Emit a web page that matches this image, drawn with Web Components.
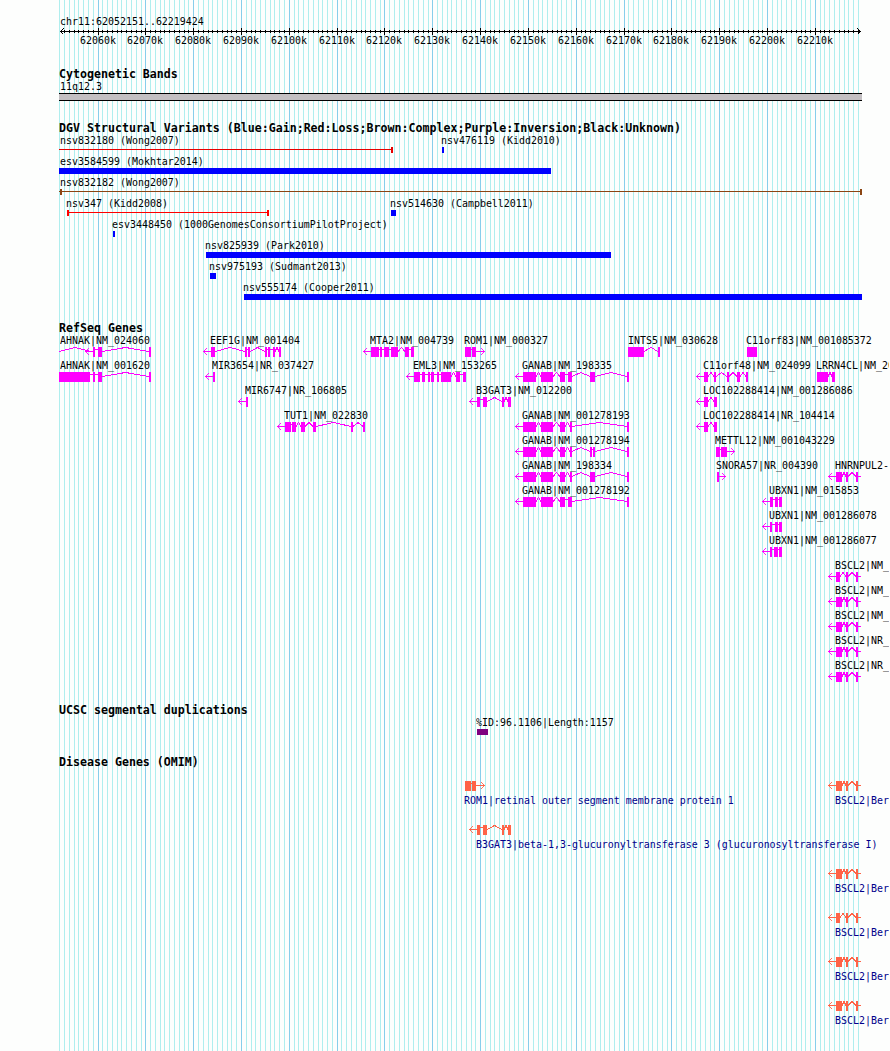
<!DOCTYPE html>
<html lang="en">
<head>
<meta charset="utf-8">
<title>chr11:62052151..62219424</title>
<style>
    body {
        margin: 0;
        background: #fdfefd;
        color: #000;
        font: 9.967px/12px "DejaVu Sans Mono", monospace;
    }
</style>
</head>
<body>
<genome-browser>
    <scale-ruler></scale-ruler>
    <genome-track heading="Cytogenetic Bands" data="bands" row-height="22"></genome-track>
    <genome-track heading="DGV Structural Variants (Blue:Gain;Red:Loss;Brown:Complex;Purple:Inversion;Black:Unknown)" data="variants" row-height="21"></genome-track>
    <genome-track heading="RefSeq Genes" data="genes" row-height="25"></genome-track>
    <genome-track heading="UCSC segmental duplications" data="duplications" row-height="20"></genome-track>
    <genome-track heading="Disease Genes (OMIM)" data="omim" row-height="44"></genome-track>
</genome-browser>

<script>
const REGION = { name: 'chr11', start: 62052151, end: 62219424 };
const LEFT = 60;
const RIGHT = 860;

function toX(bp) {
    return Math.round(LEFT + (bp - REGION.start) * (RIGHT - LEFT) / (REGION.end - REGION.start));
}

// exons are [start, end] pairs, tip is the end of the strand arrow
const gene = (label, at, exons, tip, extra = {}) => ({ type: 'gene', label, at, exons, tip, ...extra });
const bar = (label, at, start, end, color = '#00f') => ({ type: 'bar', label, at, start, end, color });
const span = (label, at, start, end, color, caps) => ({ type: 'span', label, at, start, end, color, caps });

const GANAB_HEAD = [[523, 536], [541, 553], [560, 565]];
const ROM1 = [[465, 471], [472, 476]];
const B3GAT3 = [[477, 480], [483, 487], [502, 504], [508, 511]];
const bscl = (label, firstEnd = 842) =>
    gene(label, 835, [[836, firstEnd], [846, 848], [856, 858]], 828, { runTo: 861 });
const omim = (item) => ({ ...item, color: '#ff6347', below: true });

const TRACKS = {
    bands: [
        [{ type: 'band', label: '11q12.3', at: 60, start: 59, end: 862 }]
    ],
    variants: [
        [
            span('nsv832180 (Wong2007)', 60, 59, 393, '#e60000', [391]),
            bar('nsv476119 (Kidd2010)', 441, 442, 444)
        ],
        [bar('esv3584599 (Mokhtar2014)', 60, 59, 551)],
        [span('nsv832182 (Wong2007)', 60, 59, 862, '#8b4513', [60, 860])],
        [
            span('nsv347 (Kidd2008)', 66, 67, 269, '#f00', [67, 267]),
            bar('nsv514630 (Campbell2011)', 390, 391, 396)
        ],
        [bar('esv3448450 (1000GenomesConsortiumPilotProject)', 112, 113, 115)],
        [bar('nsv825939 (Park2010)', 205, 206, 611)],
        [bar('nsv975193 (Sudmant2013)', 209, 210, 216)],
        [bar('nsv555174 (Cooper2011)', 243, 244, 862)]
    ],
    genes: [
        [
            gene('AHNAK|NM_024060', 60, [[93, 95], [98, 102], [149, 151]], 85, { lead: [59, 75, 91] }),
            gene('EEF1G|NM_001404', 210, [[211, 215], [245, 247], [248, 250], [265, 267], [268, 270], [273, 275], [279, 281]], 203),
            gene('MTA2|NM_004739', 370, [[371, 379], [380, 382], [384, 389], [391, 398], [405, 409], [411, 414]], 363),
            gene('ROM1|NM_000327', 464, ROM1, 485),
            gene('INTS5|NM_030628', 628, [[628, 644], [658, 660]]),
            gene('C11orf83|NM_001085372', 746, [[747, 757]])
        ],
        [
            gene('AHNAK|NM_001620', 60, [[59, 90], [93, 95], [98, 102], [149, 151]]),
            gene('MIR3654|NR_037427', 212, [[213, 215]], 205),
            gene('EML3|NM_153265', 413, [[414, 420], [422, 425], [428, 430], [431, 434], [437, 439], [441, 451], [456, 460], [463, 466]], 406),
            gene('GANAB|NM_198335', 522, [...GANAB_HEAD, [568, 572], [590, 595], [627, 629]], 515),
            gene('C11orf48|NM_024099', 703, [[704, 708], [714, 716], [727, 729], [737, 740], [746, 748]], 696),
            gene('LRRN4CL|NM_20', 816, [[817, 828], [832, 835]])
        ],
        [
            gene('MIR6747|NR_106805', 245, [[246, 248]], 238),
            gene('B3GAT3|NM_012200', 476, B3GAT3, 469),
            gene('LOC102288414|NM_001286086', 703, [[704, 708], [714, 717]], 696)
        ],
        [
            gene('TUT1|NM_022830', 284, [[285, 291], [292, 296], [301, 305], [313, 316], [351, 353], [363, 365]], 277),
            gene('GANAB|NM_001278193', 522, [...GANAB_HEAD, [570, 572], [627, 629]], 515),
            gene('LOC102288414|NR_104414', 703, [[704, 708], [714, 717]], 696)
        ],
        [
            gene('GANAB|NM_001278194', 522, [...GANAB_HEAD, [570, 572], [590, 592], [593, 595], [627, 629]], 515),
            gene('METTL12|NM_001043229', 715, [[716, 720], [721, 727]], 735)
        ],
        [
            gene('GANAB|NM_198334', 522, [...GANAB_HEAD, [570, 572], [590, 595], [627, 629]], 515),
            gene('SNORA57|NR_004390', 716, [[717, 719]], 726),
            bscl('HNRNPUL2-')
        ],
        [
            gene('GANAB|NM_001278192', 522, [...GANAB_HEAD, [568, 572], [627, 629]], 515),
            gene('UBXN1|NM_015853', 769, [[770, 773], [775, 778], [779, 782]], 762)
        ],
        [gene('UBXN1|NM_001286078', 769, [[770, 772], [775, 778], [779, 782]], 762)],
        [gene('UBXN1|NM_001286077', 769, [[770, 772], [774, 778], [779, 782]], 762)],
        [bscl('BSCL2|NM_', 840)],
        [bscl('BSCL2|NM_')],
        [bscl('BSCL2|NM_')],
        [bscl('BSCL2|NR_')],
        [bscl('BSCL2|NR_')]
    ],
    duplications: [
        [bar('%ID:96.1106|Length:1157', 476, 477, 488, '#800080')]
    ],
    omim: [
        [
            omim(gene('ROM1|retinal outer segment membrane protein 1', 464, ROM1, 485)),
            omim(bscl('BSCL2|Ber'))
        ],
        [omim(gene('B3GAT3|beta-1,3-glucuronyltransferase 3 (glucuronosyltransferase I)', 476, B3GAT3, 469))],
        [omim(bscl('BSCL2|Ber'))],
        [omim(bscl('BSCL2|Ber', 840))],
        [omim(bscl('BSCL2|Ber'))],
        [omim(bscl('BSCL2|Ber'))]
    ]
};

class GenomeBrowser extends HTMLElement {
    constructor() {
        super();
        this.attachShadow({ mode: 'open' });
        this.shadowRoot.innerHTML = `
            <style>
                :host {
                    display: grid;
                    width: 889px;
                    height: 1051px;
                    overflow: hidden;
                }

                grid-lines, .tracks {
                    grid-area: 1 / 1;
                }

                .tracks {
                    display: flex;
                    flex-direction: column;
                    gap: 19px;
                    padding-top: 16px;
                    min-width: 0;
                    z-index: 1;
                }
            </style>
            <grid-lines></grid-lines>
            <div class="tracks"><slot></slot></div>
        `;
    }
}

class GridLines extends HTMLElement {
    constructor() {
        super();
        this.attachShadow({ mode: 'open' });
        let lines = '';
        for (let kb = 62052; kb <= 62219; kb++) {
            const color = kb % 10 === 0 ? '#87ceeb' : '#afeeee';
            lines += `<rect x="${toX(kb * 1000)}" y="0" width="1" height="1051" fill="${color}"/>`;
        }
        this.shadowRoot.innerHTML = `
            <style>
                :host { display: block; }
                svg { display: block; }
            </style>
            <svg width="889" height="1051">${lines}</svg>
        `;
    }
}

class ScaleRuler extends HTMLElement {
    constructor() {
        super();
        this.attachShadow({ mode: 'open' });
        let ticks = '';
        let labels = '';
        for (let kb = 62053; kb <= 62219; kb++) {
            const x = toX(kb * 1000);
            if (kb % 10 === 0) {
                ticks += `<rect x="${x}" y="0" width="1" height="7"/>`;
                labels += `<span style="margin-left:${x - 18}px">${kb}k</span>`;
            } else {
                ticks += `<rect x="${x}" y="2" width="1" height="3"/>`;
            }
        }
        this.shadowRoot.innerHTML = `
            <style>
                :host { display: block; height: 33px; }
                svg { display: block; }
                .region { padding-left: 60px; }
                .labels { display: grid; }
                .labels span { grid-area: 1 / 1; justify-self: start; }
                .region, .labels { transform: scaleY(1.1); transform-origin: 0 9px; }
            </style>
            <div class="region">${REGION.name}:${REGION.start}..${REGION.end}</div>
            <svg width="889" height="7" shape-rendering="crispEdges">
                <rect x="60" y="3" width="801" height="1"/>
                ${ticks}
                <path d="M63.5 .5L60.5 3.5L63.5 6.5M857.5 .5L860.5 3.5L857.5 6.5" fill="none" stroke="#000"/>
            </svg>
            <div class="labels">${labels}</div>
        `;
    }
}

class GenomeTrack extends HTMLElement {
    constructor() {
        super();
        this.attachShadow({ mode: 'open' });
    }

    connectedCallback() {
        this.shadowRoot.innerHTML = `
            <style>
                :host { display: block; }

                h2 {
                    margin: 0 0 0 59px;
                    height: 13px;
                    font: bold 11.628px/12px "DejaVu Sans Mono", monospace;
                    white-space: nowrap;
                }

                .row {
                    display: grid;
                    grid-template-columns: 889px;
                    height: ${this.getAttribute('row-height')}px;
                }

                track-feature {
                    grid-area: 1 / 1;
                    justify-self: start;
                }
            </style>
            <h2>${this.getAttribute('heading')}</h2>
        `;

        TRACKS[this.getAttribute('data')].forEach((items) => {
            const row = document.createElement('div');
            row.className = 'row';
            items.forEach((item) => {
                const feature = document.createElement('track-feature');
                feature.item = item;
                row.appendChild(feature);
            });
            this.shadowRoot.appendChild(row);
        });
    }
}

class TrackFeature extends HTMLElement {
    constructor() {
        super();
        this.attachShadow({ mode: 'open' });
    }

    connectedCallback() {
        const { item } = this;
        const first = item.exons ? item.exons[0][0] : item.start;
        const x0 = Math.min(item.at, first, item.tip || Infinity, item.lead ? item.lead[0] : Infinity);
        const heights = { gene: 10, band: 8, bar: 6, span: 6 };
        const height = heights[item.type];

        this.shadowRoot.innerHTML = `
            <style>
                :host {
                    display: flex;
                    flex-direction: column;
                    margin-left: ${x0}px;
                }

                svg {
                    display: block;
                    overflow: visible;
                    flex: none;
                }

                .label {
                    height: 12px;
                    padding-left: ${item.at - x0}px;
                    white-space: nowrap;
                    transform: scaleY(1.1);
                    transform-origin: 0 9px;
                }

                :host(.below) svg { margin-top: 12px; }
                :host(.below) .label { order: 1; margin-top: 4px; color: #00008b; }
            </style>
            <div class="label">${item.label}</div>
            <svg width="1" height="${height}" viewBox="${x0} 0 1 ${height}" shape-rendering="crispEdges">
                ${this[item.type](item)}
            </svg>
        `;
        this.classList.toggle('below', Boolean(item.below));
    }

    bar({ start, end, color }) {
        return `<rect x="${start}" y="0" width="${end - start}" height="6" fill="${color}"/>`;
    }

    span({ start, end, color, caps }) {
        return `<g fill="${color}">
            <rect x="${start}" y="2" width="${end - start}" height="1"/>
            ${caps.map((x) => `<rect x="${x}" y="0" width="2" height="6"/>`).join('')}
        </g>`;
    }

    band({ start, end }) {
        return `<rect x="${start}" y="0" width="${end - start}" height="8"/>
            <rect x="${start}" y="1" width="${end - start}" height="6" fill="#c3bfc2"/>`;
    }

    gene({ exons, tip, lead, runTo, color = '#f0f' }) {
        const boxes = exons.map(([a, b]) => `<rect x="${a}" y="0" width="${b - a}" height="10"/>`).join('');
        const first = exons[0][0];
        const last = exons[exons.length - 1][1];
        let lines = '';
        let arrow = '';

        for (let i = 1; i < exons.length; i++) {
            const a = exons[i - 1][1];
            const b = exons[i][0];
            // tiny introns have no room for a peak
            lines += b - a <= 3
                ? `M${a} 2.5H${b}`
                : `M${a} 4.5L${(a + b) / 2} .5L${b} 4.5`;
        }
        if (lead) {
            lines += `M${lead[0]} 4.5L${lead[1]} .5L${lead[2]} 4.5`;
        }
        if (runTo) {
            lines += `M${last} 4.5H${runTo}`;
        }
        if (tip && tip < first) {
            lines += `M${first} 4.5H${tip}`;
            arrow = `M${tip + 4} 1L${tip + .5} 4.5L${tip + 4} 8`;
        } else if (tip) {
            lines += `M${last} 4.5H${tip}`;
            arrow = `M${tip - 4} 1L${tip - .5} 4.5L${tip - 4} 8`;
        }
        return `
            <g fill="${color}">${boxes}</g>
            <g fill="none" stroke="${color}">
                <path d="${lines}"/>
                <path d="${arrow}" shape-rendering="auto" stroke-width=".9"/>
            </g>
        `;
    }
}

customElements.define('grid-lines', GridLines);
customElements.define('scale-ruler', ScaleRuler);
customElements.define('track-feature', TrackFeature);
customElements.define('genome-track', GenomeTrack);
customElements.define('genome-browser', GenomeBrowser);
</script>
</body>
</html>
